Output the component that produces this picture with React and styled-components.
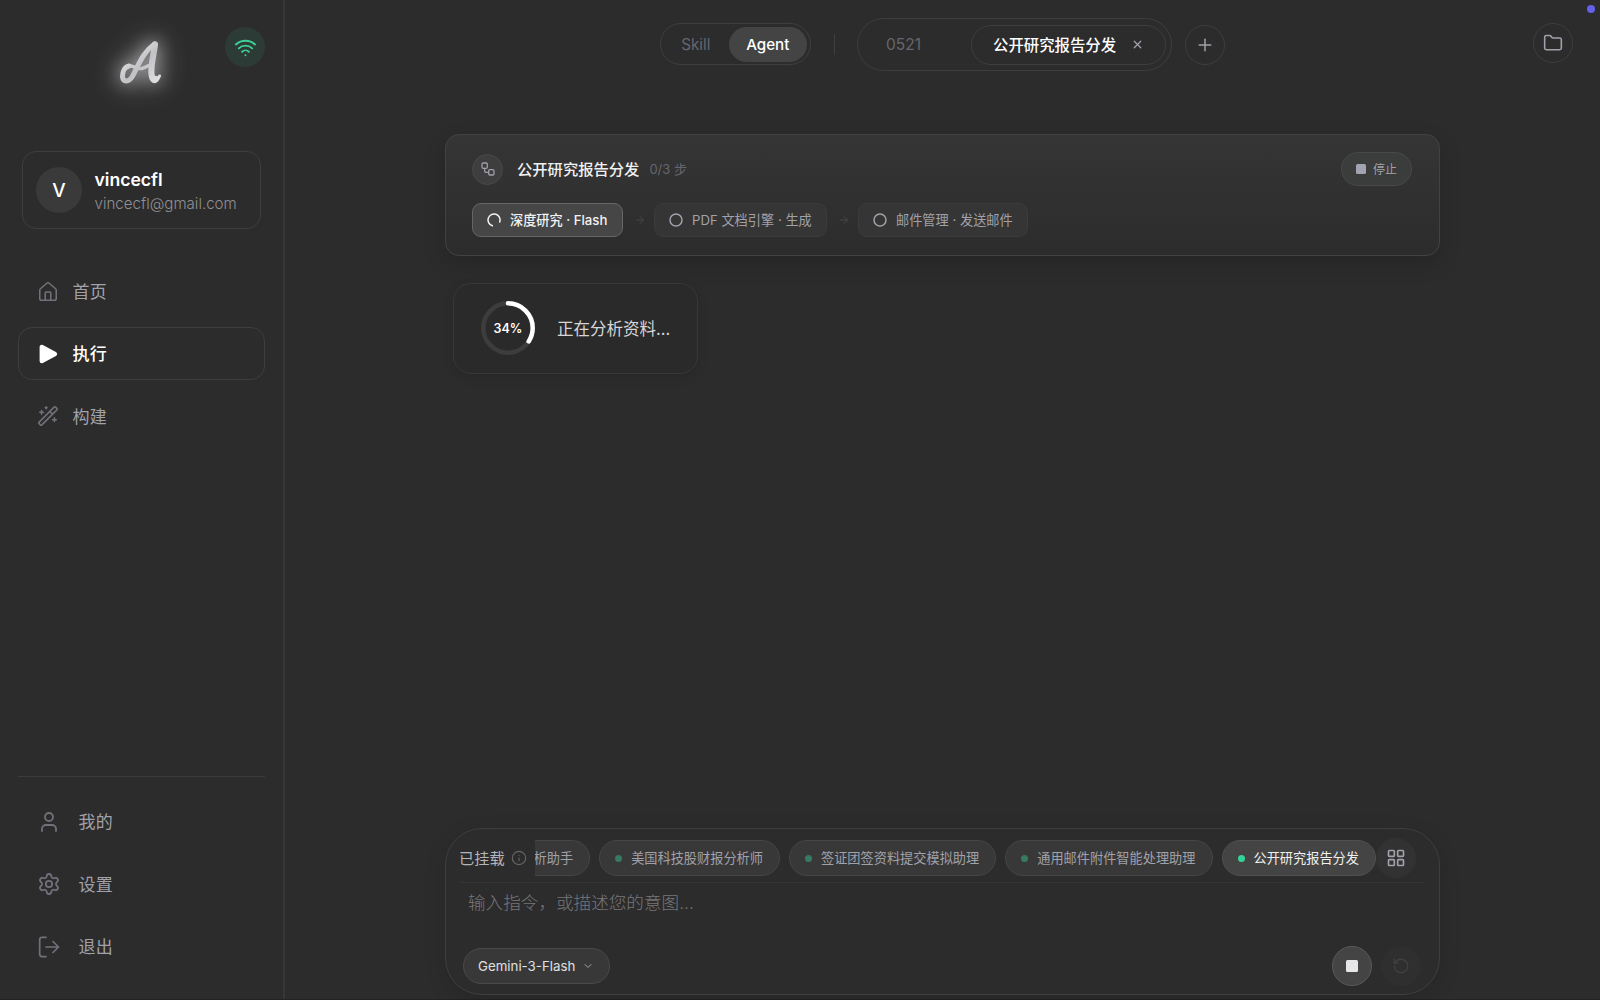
import styled, { createGlobalStyle, css } from "styled-components";
import {
  House,
  WandSparkles,
  User,
  Wifi,
  Folder,
  Plus,
  X,
  Workflow,
  ArrowRight,
  Info,
  LayoutGrid,
  ChevronDown,
  RotateCcw,
} from "lucide-react";

const Colors = {
  BACKGROUND: "#2c2c2c",
  LINE: "#3e3e3e",
  TEXT: "#ffffff",
  TEXT_SOFT: "#a1a1aa",
  TEXT_MUTED: "#71717a",
  GREEN: "#34d399",
  PURPLE: "#6560ea",
};

const GlobalStyle = createGlobalStyle`
    * {
        box-sizing: border-box;
    }

    body {
        margin: 0;
        background: ${Colors.BACKGROUND};
        color: ${Colors.TEXT};
        font-family: Inter, "Noto Sans CJK SC", sans-serif;
        overflow: hidden;
    }

    svg {
        display: block;
        flex-shrink: 0;
    }
`;

const Page = styled.div`
    position: relative;
    display: flex;
    width: 1600px;
    height: 1000px;
    border-bottom: 1px solid #242223;
`;

/* Chinese glyphs sit low in the line box, this lifts them to the icons */
const Label = styled.span`
    margin-top: -2px;
    white-space: nowrap;
`;

/* Sidebar */

const Sidebar = styled.aside`
    width: 285px;
    height: 100%;
    display: flex;
    flex-direction: column;
    padding: 27px 18px 26px;
    border-right: 2px solid #373737;
`;

const Brand = styled.div`
    display: flex;
    justify-content: flex-end;
    align-items: flex-start;
    gap: 60px;
    height: 124px;
`;

const Logo = styled.svg`
    width: 48px;
    height: 52px;
    margin-top: 9px;
    overflow: visible;
    filter: drop-shadow(0 0 9px rgba(255, 255, 255, 0.6)) drop-shadow(0 0 14px rgba(255, 255, 255, 0.45));
`;

const Signal = styled.div`
    width: 40px;
    height: 40px;
    border-radius: 50%;
    display: flex;
    justify-content: center;
    align-items: center;
    background: #2d3b36;
    color: #3ecf98;
`;

const UserCard = styled.div`
    height: 78px;
    margin: 0 4px;
    padding: 2px 13px 0;
    display: flex;
    align-items: center;
    gap: 12.5px;
    border: 1px solid ${Colors.LINE};
    border-radius: 14px;
`;

const Avatar = styled.div`
    width: 46px;
    height: 46px;
    margin-top: -2px;
    border-radius: 50%;
    display: flex;
    justify-content: center;
    align-items: center;
    background: #3a3a3a;
    font-size: 19px;
    font-weight: 500;
`;

const UserName = styled.div`
    font-size: 17.6px;
    font-weight: 600;
    line-height: 25px;
`;

const UserMail = styled.div`
    color: #909095;
    font-size: 15.1px;
    font-weight: 300;
    line-height: 24px;
`;

const Nav = styled.nav`
    display: flex;
    flex-direction: column;
    gap: 9.3px;
    margin-top: ${({ $bottom }) => ($bottom ? "auto" : "36px")};
    padding-top: ${({ $bottom }) => ($bottom ? "18px" : "0")};
    border-top: ${({ $bottom }) => ($bottom ? "1px solid #3c3c3c" : "none")};
`;

const NavItem = styled.div`
    height: 53px;
    padding-left: 18px;
    display: flex;
    align-items: center;
    gap: ${({ $wide }) => ($wide ? "17.5px" : "13.5px")};
    border: 1px solid ${({ $active }) => ($active ? Colors.LINE : "transparent")};
    border-radius: 14px;
    color: ${({ $active }) => ($active ? Colors.TEXT : Colors.TEXT_SOFT)};
    font-size: 17px;
    font-weight: ${({ $active }) => ($active ? 500 : 400)};
    letter-spacing: 0.2px;

    svg {
        color: ${({ $active }) => ($active ? Colors.TEXT : Colors.TEXT_MUTED)};
    }
`;

/* Top bar */

const Main = styled.main`
    flex: 1;
    min-width: 0;
    display: flex;
    flex-direction: column;
`;

const TopBar = styled.header`
    height: 88px;
    display: flex;
    align-items: center;
    padding: 1px 27px 0 375px;
`;

const Pill = styled.div`
    display: flex;
    align-items: center;
    border: 1px solid ${Colors.LINE};
    border-radius: 40px;
`;

const ModeSwitch = styled(Pill)`
    width: 151px;
    height: 42px;
    margin-top: -1px;
    padding: 0 3px 0 4px;
`;

const Mode = styled.div`
    height: 35px;
    width: ${({ $active }) => ($active ? "79px" : "64px")};
    padding-right: ${({ $active }) => ($active ? "0" : "2px")};
    display: flex;
    justify-content: center;
    align-items: center;
    border-radius: 20px;
    background: ${({ $active }) => ($active ? "#444444" : "transparent")};
    color: ${({ $active }) => ($active ? Colors.TEXT : "#66666f")};
    font-size: 15.2px;
    font-weight: ${({ $active }) => ($active ? 500 : 400)};
`;

const Divider = styled.div`
    width: 1px;
    height: 21px;
    margin: 0 22px 0 23px;
    background: ${Colors.LINE};
`;

const Tabs = styled(Pill)`
    width: 315px;
    height: 53px;
    padding: 0 5px 0 28px;
    justify-content: space-between;
`;

const TabText = styled.span`
    color: #66666f;
    font-size: 15.5px;
`;

const CurrentTab = styled(Pill)`
    width: 195px;
    height: 40px;
    padding-left: 21px;
    gap: 15px;
    font-size: 15.4px;
    font-weight: 500;

    svg {
        color: ${Colors.TEXT_SOFT};
    }
`;

const RoundButton = styled.div`
    width: 40px;
    height: 40px;
    flex-shrink: 0;
    border-radius: 50%;
    display: flex;
    justify-content: center;
    align-items: center;
    border: 1px solid ${({ $line }) => $line || "transparent"};
    background: ${({ $fill }) => $fill || "transparent"};
    color: ${Colors.TEXT_SOFT};
`;

const AddButton = styled(RoundButton)`
    margin-left: 13px;
`;

const FolderButton = styled(RoundButton)`
    margin: -3px 0 0 auto;
`;

const Notice = styled.div`
    position: absolute;
    top: 5px;
    right: 5px;
    width: 8px;
    height: 8px;
    border-radius: 50%;
    background: ${Colors.PURPLE};
`;

/* Workflow */

const Column = styled.section`
    flex: 1;
    width: 995px;
    margin: 45.5px 0 4px 160px;
    display: flex;
    flex-direction: column;
`;

const FlowCard = styled.div`
    height: 122px;
    padding: 17.5px 27px 0 26px;
    border: 1px solid #424242;
    border-radius: 14px;
    background: linear-gradient(180deg, #353535 0%, #2c2c2c 100%);
    box-shadow: 0 8px 22px rgba(0, 0, 0, 0.16);
`;

const FlowHead = styled.div`
    height: 34px;
    display: flex;
    align-items: center;
`;

const FlowIcon = styled.div`
    width: 31px;
    height: 31px;
    border-radius: 50%;
    display: flex;
    justify-content: center;
    align-items: center;
    border: 1px solid #494949;
    background: #3e3e3f;
    color: ${Colors.TEXT_SOFT};
`;

const FlowTitle = styled(Label)`
    margin-left: 14px;
    color: #f0f0f1;
    font-size: 15.3px;
    font-weight: 500;
`;

const FlowCount = styled(Label)`
    margin-left: 10px;
    color: #66666f;
    font-size: 13px;
`;

const StopFlow = styled.div`
    width: 71px;
    height: 34px;
    margin-left: auto;
    display: flex;
    justify-content: center;
    align-items: center;
    gap: 7px;
    border: 1px solid #484848;
    border-radius: 20px;
    background: #3b3c3c;
    color: ${Colors.TEXT_SOFT};
    font-size: 12px;
`;

const Square = styled.i`
    width: ${({ $size }) => $size}px;
    height: ${({ $size }) => $size}px;
    border-radius: 1.5px;
    background: ${({ $color }) => $color};
`;

const Steps = styled.div`
    display: flex;
    align-items: center;
    margin-top: 17px;
`;

const Step = styled.div`
    width: ${({ $width }) => $width}px;
    height: 34px;
    padding-left: 14px;
    display: flex;
    align-items: center;
    gap: 9px;
    border: 1px solid #3b3b3b;
    border-radius: 9px;
    background: #353535;
    color: ${Colors.TEXT_SOFT};
    font-size: 13.2px;

    ${({ $active }) =>
      $active &&
      css`
        border-color: #666666;
        background: #464646;
        color: #f2f2f2;
        font-weight: 500;
    `}
`;

const StepArrow = styled(ArrowRight)`
    margin: 0 8.5px 0 10.5px;
    color: #464648;
`;

const ProgressCard = styled.div`
    width: 245px;
    height: 91px;
    margin: 27px 0 0 8px;
    padding-left: 26px;
    display: flex;
    align-items: center;
    gap: 21px;
    border: 1px solid #383838;
    border-radius: 18px;
    background: #2a2a2a;
    box-shadow: 0 4px 12px rgba(0, 0, 0, 0.1);
    color: #d6d6d8;
    font-size: 16.5px;
`;

const Ring = styled.div`
    display: grid;
    place-items: center;

    > * {
        grid-area: 1 / 1;
    }
`;

const Percent = styled.span`
    color: ${Colors.TEXT};
    font-size: 12.5px;
    font-weight: 600;
`;

/* Composer */

const Composer = styled.div`
    height: 167px;
    margin-top: auto;
    padding: 5px 15px 0 14px;
    border: 1px solid ${Colors.LINE};
    border-radius: 37px;
    box-shadow: 0 6px 22px rgba(0, 0, 0, 0.12);
`;

const MountRow = styled.div`
    height: 49px;
    display: flex;
    align-items: center;
    border-bottom: 1px solid #343434;
`;

const MountLabel = styled(Label)`
    width: 52px;
    margin-left: -1px;
    color: #b4b4bb;
    font-size: 15.2px;
`;

const InfoIcon = styled(Info)`
    margin-right: 8px;
    color: #66666a;
`;

const ChipList = styled.div`
    width: 841px;
    display: flex;
    justify-content: flex-end;
    gap: 9px;
    overflow: hidden;
`;

const Chip = styled.div`
    height: 36px;
    padding: 0 16px 0 15px;
    flex-shrink: 0;
    display: flex;
    align-items: center;
    gap: 9px;
    border: 1px solid ${({ $active }) => ($active ? "#505050" : "#464646")};
    border-radius: 18px;
    background: ${({ $active }) => ($active ? "#444444" : "#383838")};
    color: ${({ $active }) => ($active ? "#f0f0f0" : Colors.TEXT_SOFT)};
    font-size: 13.2px;
`;

const Dot = styled.i`
    width: 7px;
    height: 7px;
    border-radius: 50%;
    background: ${({ $active }) => ($active ? Colors.GREEN : "#357a61")};
`;

const Placeholder = styled.div`
    height: 42px;
    padding-left: 8px;
    color: #77777b;
    font-size: 17.6px;
    font-weight: 300;
    line-height: 39px;
`;

const Tools = styled.div`
    display: flex;
    align-items: center;
    gap: 9px;
    padding: 20.5px 3px 0;
`;

const Model = styled.div`
    width: 147px;
    height: 36px;
    margin-right: auto;
    padding-left: 14px;
    display: flex;
    align-items: center;
    gap: 7px;
    border: 1px solid #4a4a4a;
    border-radius: 18px;
    background: #383838;
    color: #e0e0e2;
    font-size: 13.3px;
    white-space: nowrap;

    svg {
        color: ${Colors.TEXT_SOFT};
    }
`;

function BrandLogo() {
  return (
    <Logo viewBox="0 0 48 52">
      <defs>
        <linearGradient id="brand" gradientUnits="userSpaceOnUse" x1="4" y1="6" x2="44" y2="46">
          <stop offset="0" stopColor="#f2f2f3" />
          <stop offset="0.55" stopColor="#c2c2c6" />
          <stop offset="1" stopColor="#e4e4e6" />
        </linearGradient>
      </defs>
      <g fill="none" stroke="url(#brand)" strokeLinecap="round" strokeLinejoin="round">
        <path strokeWidth="5" d="M12 30C7.500 31 5.500 36 5.500 40.500C6 46.500 12 46 15 41C21 31 25 17 37.500 8" />
        <path strokeWidth="6.200" d="M38 8.500C37 17 33.500 29 34.500 38C35 43.500 37 45 39 43" />
        <path strokeWidth="3" d="M38 44.500C40 44 41.500 42.500 42.500 40" />
        <path strokeWidth="3.400" d="M10 30.500C15 27.500 19 34 24.500 32.500C29 31.500 31 29.500 34 28.500" />
      </g>
    </Logo>
  );
}

function PlayIcon() {
  return (
    <svg width="22" height="22" viewBox="0 0 22 22">
      <path
        d="M4.800 4V18L17.900 11Z"
        fill="currentColor"
        stroke="currentColor"
        strokeWidth="4.400"
        strokeLinejoin="round"
      />
    </svg>
  );
}

function GearIcon() {
  return (
    <svg width="24" height="24" viewBox="0 0 24 24" fill="none" stroke="currentColor" strokeWidth="1.800" strokeLinecap="round" strokeLinejoin="round">
      <path d="M9.671 4.136a2.340 2.340 0 0 1 4.659 0 2.340 2.340 0 0 0 3.319 1.915 2.340 2.340 0 0 1 2.330 4.033 2.340 2.340 0 0 0 0 3.831 2.340 2.340 0 0 1-2.330 4.033 2.340 2.340 0 0 0-3.319 1.915 2.340 2.340 0 0 1-4.659 0 2.340 2.340 0 0 0-3.320-1.915 2.340 2.340 0 0 1-2.330-4.033 2.340 2.340 0 0 0 0-3.831A2.340 2.340 0 0 1 6.350 6.051a2.340 2.340 0 0 0 3.319-1.915" />
      <circle cx="12" cy="12" r="3.200" />
    </svg>
  );
}

function ExitIcon() {
  return (
    <svg width="24" height="22" viewBox="-1.500 0 24 22" fill="none" stroke="currentColor" strokeWidth="1.700" strokeLinecap="round" strokeLinejoin="round">
      <path d="M7.500 1.400H3.500Q1.200 1.400 1.200 3.700V18.300Q1.200 20.600 3.500 20.600H7.500" />
      <path d="M7.500 11H20M14.500 5.500L20 11L14.500 16.500" />
    </svg>
  );
}

function StepMark({ loading }) {
  return (
    <svg width="14" height="14" viewBox="0 0 14 14" fill="none" stroke="currentColor" strokeWidth="1.500" strokeLinecap="round">
      {loading ? <path d="M6.200 12.900A6 6 0 1 1 12.900 8.200" transform="rotate(8 7 7)" /> : <circle cx="7" cy="7" r="6" />}
    </svg>
  );
}

function ProgressRing({ value }) {
  const length = 2 * Math.PI * 24.7;
  return (
    <Ring>
      <svg width="56" height="56" viewBox="0 0 56 56" fill="none" strokeWidth="4.500">
        <circle cx="28" cy="28" r="24.700" stroke="#3d3d3d" />
        <circle
          cx="28"
          cy="28"
          r="24.700"
          stroke="#ffffff"
          strokeLinecap="round"
          strokeDasharray={`${(length * value) / 100} ${length}`}
          transform="rotate(-90 28 28)"
        />
      </svg>
      <Percent>{value}%</Percent>
    </Ring>
  );
}

const agents = ["析助手", "美国科技股财报分析师", "签证团签资料提交模拟助理", "通用邮件附件智能处理助理", "公开研究报告分发"];

export default function App() {
  return (
    <>
      <GlobalStyle />
      <Page>
        <Sidebar>
          <Brand>
            <BrandLogo />
            <Signal>
              <Wifi size={23} strokeWidth={2} />
            </Signal>
          </Brand>
          <UserCard>
            <Avatar>V</Avatar>
            <div>
              <UserName>vincecfl</UserName>
              <UserMail>vincecfl@gmail.com</UserMail>
            </div>
          </UserCard>

          <Nav>
            <NavItem>
              <House size={22} strokeWidth={1.7} />
              <Label>首页</Label>
            </NavItem>
            <NavItem $active>
              <PlayIcon />
              <Label>执行</Label>
            </NavItem>
            <NavItem>
              <WandSparkles size={22} strokeWidth={1.7} />
              <Label>构建</Label>
            </NavItem>
          </Nav>

          <Nav $bottom>
            <NavItem $wide>
              <User size={24} strokeWidth={1.8} />
              <Label>我的</Label>
            </NavItem>
            <NavItem $wide>
              <GearIcon />
              <Label>设置</Label>
            </NavItem>
            <NavItem $wide>
              <ExitIcon />
              <Label>退出</Label>
            </NavItem>
          </Nav>
        </Sidebar>

        <Main>
          <TopBar>
            <ModeSwitch>
              <Mode>Skill</Mode>
              <Mode $active>Agent</Mode>
            </ModeSwitch>
            <Divider />
            <Tabs>
              <TabText>0521</TabText>
              <CurrentTab>
                <Label>公开研究报告分发</Label>
                <X size={13} strokeWidth={2.4} />
              </CurrentTab>
            </Tabs>
            <AddButton $line={Colors.LINE}>
              <Plus size={20} strokeWidth={1.8} />
            </AddButton>
            <FolderButton $line={Colors.LINE}>
              <Folder size={20} strokeWidth={1.9} />
            </FolderButton>
          </TopBar>

          <Column>
            <FlowCard>
              <FlowHead>
                <FlowIcon>
                  <Workflow size={16} strokeWidth={1.9} />
                </FlowIcon>
                <FlowTitle>公开研究报告分发</FlowTitle>
                <FlowCount>0/3 步</FlowCount>
                <StopFlow>
                  <Square $size={10} $color="#a1a3b0" />
                  <Label>停止</Label>
                </StopFlow>
              </FlowHead>
              <Steps>
                <Step $active $width={151}>
                  <StepMark loading />
                  <Label>深度研究 · Flash</Label>
                </Step>
                <StepArrow size={12} />
                <Step $width={173}>
                  <StepMark />
                  <Label>PDF 文档引擎 · 生成</Label>
                </Step>
                <StepArrow size={12} />
                <Step $width={170}>
                  <StepMark />
                  <Label>邮件管理 · 发送邮件</Label>
                </Step>
              </Steps>
            </FlowCard>

            <ProgressCard>
              <ProgressRing value={34} />
              正在分析资料...
            </ProgressCard>

            <Composer>
              <MountRow>
                <MountLabel>已挂载</MountLabel>
                <InfoIcon size={16} strokeWidth={1.7} />
                <ChipList>
                  {agents.map((name, i) => (
                    <Chip key={name} $active={i === agents.length - 1}>
                      <Dot $active={i === agents.length - 1} />
                      <Label>{name}</Label>
                    </Chip>
                  ))}
                </ChipList>
                <RoundButton $fill="#323232">
                  <LayoutGrid size={20} strokeWidth={2} />
                </RoundButton>
              </MountRow>
              <Placeholder>输入指令，或描述您的意图...</Placeholder>
              <Tools>
                <Model>
                  Gemini-3-Flash
                  <ChevronDown size={12} />
                </Model>
                <RoundButton $fill="#444444" $line="#5a5a5a">
                  <Square $size={12} $color="#e6e6e8" />
                </RoundButton>
                <RoundButton $fill="#2f2f2f">
                  <RotateCcw size={18} strokeWidth={1.7} color="#3f4143" />
                </RoundButton>
              </Tools>
            </Composer>
          </Column>
        </Main>
        <Notice />
      </Page>
    </>
  );
}
